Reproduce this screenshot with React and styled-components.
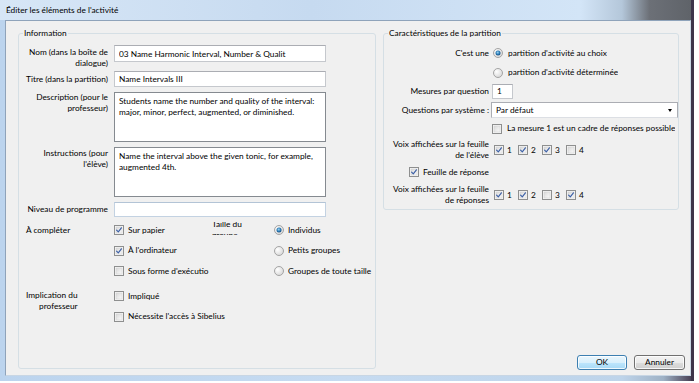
import React from 'react';
import styled, { createGlobalStyle, css } from 'styled-components';

const Global = createGlobalStyle`
  html, body { margin: 0; padding: 0; background: #ffffff; }
  body {
    font-family: Lato, "Open Sans", sans-serif;
    font-size: 8.3px;
    color: #000;
  }
  * { box-sizing: border-box; }
`;

const FONT = css`
  font-family: Lato, "Open Sans", sans-serif;
  font-size: 8.3px;
  color: #000;
`;

const Window = styled.div`
  width: 694px;
  height: 381px;
  display: flex;
  flex-direction: column;
  background: linear-gradient(90deg, #bcd4ee 0%, #c6dbf1 50%, #bed4ea 90%, #9fb2c6 96%, #4a4256 100%);
  border-right: 3px solid #3d344a;
`;

const TitleBar = styled.div`
  height: 20px;
  flex: none;
  padding-left: 6px;
  line-height: 20px;
  white-space: nowrap;
  background: linear-gradient(90deg, #d7e6f6 0%, #c6daf0 45%, #d3e5f7 84%, #b4c7da 90%, #6c7077 94%, #5f6369 100%);
`;

const Frame = styled.div`
  flex: 1;
  display: flex;
  padding: 0 0 5px 5px;
  min-height: 0;
`;

const Client = styled.div`
  flex: 1;
  background: #f0f0f0;
  border: 1px solid #8fa3ba;
  border-right-color: #c8d6e4;
  border-bottom-color: #c8d6e4;
  display: grid;
  grid-template-columns: 358px 302px;
  column-gap: 7px;
  padding: 6.5px 0 6px 12px;
`;

const Group = styled.fieldset`
  margin: 0;
  padding: 0;
  min-width: 0;
  border: 1px solid #d5dfe5;
  border-radius: 3px;
  overflow: hidden;
  align-self: ${p => (p.$stretch ? 'stretch' : 'start')};
`;

const Legend = styled.legend`
  margin-left: 4px;
  padding: 0 1px;
  line-height: 11px;
  height: 11px;
`;

const LeftContent = styled.div`
  padding: 6.5px 0 0 7px;
`;

const FormRow = styled.div`
  display: grid;
  grid-template-columns: 82px 212px;
  column-gap: 6px;
  height: ${p => p.$h}px;
  align-items: start;
`;

const Label = styled.div`
  text-align: ${p => (p.$left ? 'left' : 'right')};
  line-height: 11px;
  padding-top: ${p => p.$pt ?? 2}px;
  white-space: nowrap;
`;

const TextInput = styled.input`
  ${FONT};
  display: block;
  width: ${p => p.$w || 212}px;
  height: ${p => p.$h || 17}px;
  margin: 0;
  padding: 0 4px;
  border: 1px solid ${p => p.$border || '#c5c8cd'};
  border-top-color: ${p => p.$borderTop || '#abadb3'};
  background: #fff;
  outline: none;
`;

const TextArea = styled.textarea`
  ${FONT};
  display: block;
  width: 212px;
  height: 50px;
  margin: 0;
  padding: 3px 4px;
  line-height: 11px;
  border: 1px solid #858a90;
  background: #fff;
  resize: none;
  overflow: hidden;
  white-space: pre;
  outline: none;
`;

const OptionsGrid = styled.div`
  display: grid;
  grid-template-columns: 88px 98px 62px 101px;
  grid-auto-rows: 20.5px;
  align-items: center;
  padding-top: 2px;
`;

const ImplicationGrid = styled(OptionsGrid)`
  padding-top: 4.5px;
`;

const ClipLabel = styled.div`
  align-self: start;
  height: 13px;
  margin-top: 2px;
  overflow: hidden;
  line-height: 11px;
  white-space: nowrap;
`;

const ClipInner = styled.div`
  margin-top: -3px;
`;

const SpanLabel = styled.div`
  grid-row: span 2;
  align-self: start;
  justify-self: start;
  text-align: right;
  line-height: 11px;
  padding-top: 4px;
`;

const Choice = styled.label`
  display: inline-flex;
  align-items: center;
  gap: ${p => p.$gap ?? 4}px;
  white-space: nowrap;
  overflow: hidden;
  min-width: 0;
  line-height: 11px;
  grid-column: ${p => p.$span ? `2 / span ${p.$span}` : 'auto'};
`;

const BoxSvg = styled.svg`
  flex: none;
  display: block;
`;

function CheckBox({ checked }) {
  return (
    <BoxSvg width="10" height="10" viewBox="0 0 10 10">
      <defs>
        <linearGradient id="cbg" x1="0" y1="0" x2="1" y2="1">
          <stop offset="0" stopColor="#d8d8d8" />
          <stop offset="1" stopColor="#fbfbfb" />
        </linearGradient>
      </defs>
      <rect x="0.5" y="0.5" width="9" height="9" fill="#f6f6f6" stroke="#8e8f8f" />
      <rect x="2" y="2" width="6" height="6" fill="url(#cbg)" stroke="#cfcfcf" strokeWidth="0.5" />
      {checked && (
        <path d="M2.6 5.1 L4.3 6.9 L7.4 2.8" fill="none" stroke="#3b5fa6" strokeWidth="1.15" strokeLinecap="round" strokeLinejoin="round" />
      )}
    </BoxSvg>
  );
}

function Radio({ checked }) {
  return (
    <BoxSvg width="10" height="10" viewBox="0 0 10 10">
      <defs>
        <radialGradient id="rbg" cx="0.35" cy="0.35" r="0.8">
          <stop offset="0" stopColor="#ffffff" />
          <stop offset="1" stopColor="#d2d2d2" />
        </radialGradient>
        <radialGradient id="rdot" cx="0.45" cy="0.4" r="0.6">
          <stop offset="0" stopColor="#9fd6f4" />
          <stop offset="0.6" stopColor="#2a7bb6" />
          <stop offset="1" stopColor="#1a4e7e" />
        </radialGradient>
      </defs>
      <circle cx="5" cy="5" r="4.5" fill="url(#rbg)" stroke="#a4a4a4" />
      {checked && <circle cx="5" cy="5" r="2.5" fill="url(#rdot)" />}
    </BoxSvg>
  );
}

const RightCol = styled.div`
  display: flex;
  flex-direction: column;
  min-height: 0;
`;

const RightContent = styled.div`
  padding: 4.5px 0 0 5px;
  display: grid;
  grid-template-columns: 100px 186px;
  column-gap: 3px;
  grid-template-rows: 20px 19px 18px 20px 17px 26px 18px 28px;
  align-items: center;
`;

const RLabel = styled.div`
  text-align: right;
  line-height: ${p => (p.$two ? 11.5 : 11)}px;
  white-space: nowrap;
`;

const Cell = styled.div`
  grid-column: ${p => p.$col || 'auto'};
  display: flex;
  align-items: center;
  padding-left: ${p => p.$pl ?? 0}px;
  justify-content: ${p => (p.$end ? 'flex-end' : 'flex-start')};
`;

const Select = styled.div`
  width: 187px;
  height: 16px;
  margin-left: -1px;
  border: 1px solid #abadb3;
  border-bottom-color: #dcdfe4;
  background: #fff;
  display: flex;
  align-items: center;
  justify-content: space-between;
  padding: 0 5px 0 4px;
  line-height: 11px;
`;

const Caret = styled.span`
  width: 0;
  height: 0;
  border-left: 2.5px solid transparent;
  border-right: 2.5px solid transparent;
  border-top: 3px solid #000;
`;

const Voices = styled.div`
  display: grid;
  grid-template-columns: repeat(4, 24px);
  padding-left: 2px;
`;

const ButtonRow = styled.div`
  margin-top: auto;
  margin-bottom: -1px;
  display: flex;
  justify-content: flex-end;
  gap: 7px;
`;

const Button = styled.button`
  ${FONT};
  width: ${p => p.$w}px;
  height: 15px;
  padding: 0;
  margin: 0;
  border-radius: 3px;
  line-height: 13px;
  border: 1px solid #707070;
  box-shadow: inset 0 0 0 1px rgba(255, 255, 255, 0.8);
  background: linear-gradient(#f2f2f2 0%, #ebebeb 50%, #dddddd 51%, #cfcfcf 100%);
  ${p =>
    p.$default &&
    css`
      border-color: #3c7fb1;
      background: linear-gradient(#eaf6fd 0%, #d9f0fc 50%, #bee6fd 51%, #a7d9f5 100%);
    `}
`;

export default function App() {
  return (
    <>
      <Global />
      <Window>
        <TitleBar>Éditer les éléments de l'activité</TitleBar>
        <Frame>
          <Client>
            <Group $stretch>
              <Legend>Information</Legend>
              <LeftContent>
                <FormRow $h={26}>
                  <Label>Nom (dans la boîte de<br />dialogue)</Label>
                  <TextInput readOnly defaultValue="03 Name Harmonic Interval, Number & Qualit" />
                </FormRow>
                <FormRow $h={21}>
                  <Label $pt={3}>Titre (dans la partition)</Label>
                  <TextInput $h={16} readOnly defaultValue="Name Intervals III" />
                </FormRow>
                <FormRow $h={55}>
                  <Label $pt={0}>Description (pour le<br />professeur)</Label>
                  <TextArea readOnly defaultValue={'Students name the number and quality of the interval:\nmajor, minor, perfect, augmented, or diminished.'} />
                </FormRow>
                <FormRow $h={55}>
                  <Label $pt={1}>Instructions (pour<br />l'élève)</Label>
                  <TextArea readOnly defaultValue={'Name the interval above the given tonic, for example,\naugmented 4th.'} />
                </FormRow>
                <FormRow $h={16}>
                  <Label $pt={2}>Niveau de programme</Label>
                  <TextInput $h={15} $border="#c3d2e2" $borderTop="#b3c4d6" readOnly defaultValue="" />
                </FormRow>
                <OptionsGrid>
                  <Label $left $pt={0}>À compléter</Label>
                  <Choice><CheckBox checked />Sur papier</Choice>
                  <ClipLabel><ClipInner>Taille du<br />groupe</ClipInner></ClipLabel>
                  <Choice><Radio checked />Individus</Choice>

                  <span />
                  <Choice><CheckBox checked />À l'ordinateur</Choice>
                  <span />
                  <Choice><Radio />Petits groupes</Choice>

                  <span />
                  <Choice><CheckBox />Sous forme d'exécutio</Choice>
                  <span />
                  <Choice><Radio />Groupes de toute taille</Choice>
                </OptionsGrid>
                <ImplicationGrid>
                  <SpanLabel>Implication du<br />professeur</SpanLabel>
                  <Choice><CheckBox />Impliqué</Choice>
                  <Choice $span={2}><CheckBox />Nécessite l'accès à Sibelius</Choice>
                </ImplicationGrid>
              </LeftContent>
            </Group>

            <RightCol>
              <Group>
                <Legend>Caractéristiques de la partition</Legend>
                <RightContent>
                  <RLabel>C'est une</RLabel>
                  <Cell $pl={1}><Choice $gap={5}><Radio checked />partition d'activité au choix</Choice></Cell>

                  <Cell $col="2" $pl={1}><Choice $gap={5}><Radio />partition d'activité déterminée</Choice></Cell>

                  <RLabel>Mesures par question</RLabel>
                  <Cell><TextInput $w={21} $h={15} readOnly defaultValue="1" /></Cell>

                  <RLabel>Questions par système :</RLabel>
                  <Cell><Select>Par défaut<Caret /></Select></Cell>

                  <Cell $col="2"><Choice $gap={5}><CheckBox />La mesure 1 est un cadre de réponses possible</Choice></Cell>

                  <RLabel $two>Voix affichées sur la feuille<br />de l'élève</RLabel>
                  <Cell>
                    <Voices>
                      <Choice $gap={3}><CheckBox checked />1</Choice>
                      <Choice $gap={3}><CheckBox checked />2</Choice>
                      <Choice $gap={3}><CheckBox checked />3</Choice>
                      <Choice $gap={3}><CheckBox />4</Choice>
                    </Voices>
                  </Cell>

                  <Cell $end><Choice $gap={4}><CheckBox checked />Feuille de réponse</Choice></Cell>
                  <span />

                  <RLabel $two>Voix affichées sur la feuille<br />de réponses</RLabel>
                  <Cell>
                    <Voices>
                      <Choice $gap={3}><CheckBox checked />1</Choice>
                      <Choice $gap={3}><CheckBox checked />2</Choice>
                      <Choice $gap={3}><CheckBox />3</Choice>
                      <Choice $gap={3}><CheckBox checked />4</Choice>
                    </Voices>
                  </Cell>
                </RightContent>
              </Group>
              <ButtonRow>
                <Button $w={50} $default>OK</Button>
                <Button $w={51}>Annuler</Button>
              </ButtonRow>
            </RightCol>
          </Client>
        </Frame>
      </Window>
    </>
  );
}
